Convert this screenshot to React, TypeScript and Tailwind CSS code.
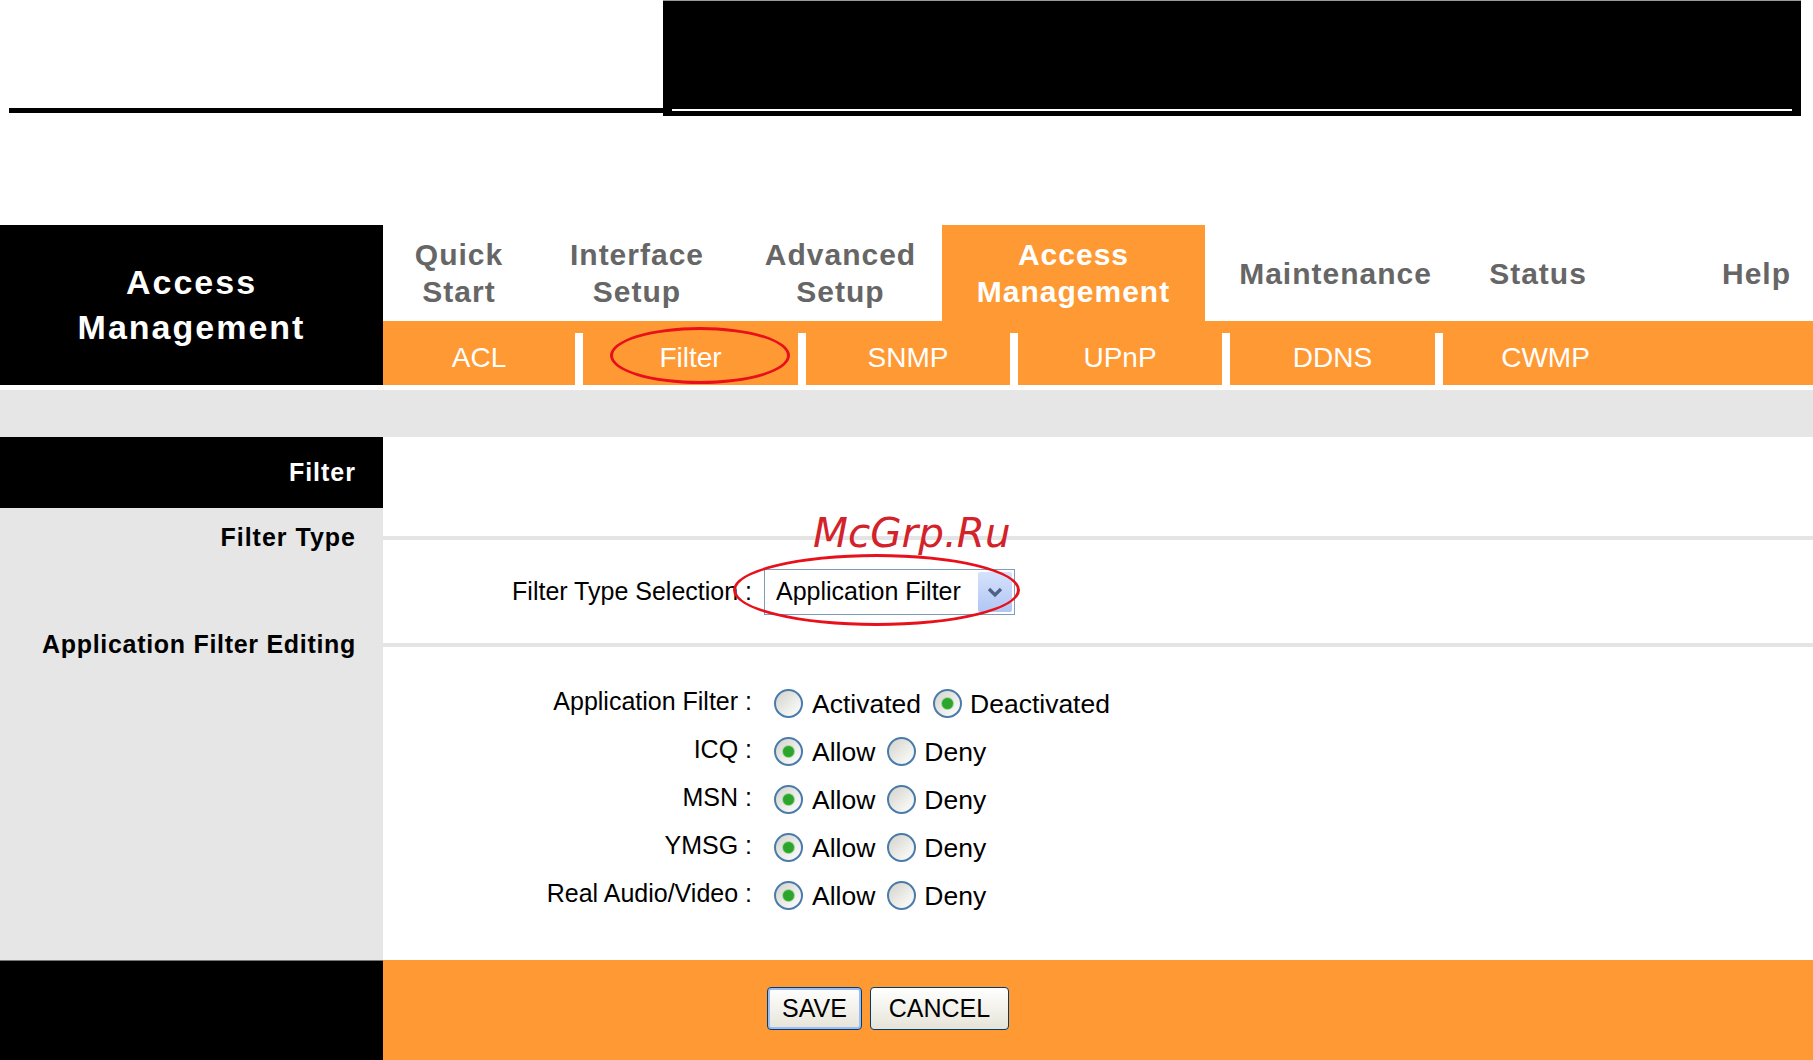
import React from "react";

interface RadioProps {
  on?: boolean;
  className?: string;
}

// XP style radio button
function Radio({ on, className }: RadioProps) {
  return (
    <span
      className={`w-[29px] h-[29px] shrink-0 rounded-full border-2 border-[#4a7bab] bg-linear-to-br from-[#d4d4cc] to-white flex items-center justify-center ${className ?? ""}`}
    >
      {on && <span className="w-[11px] h-[11px] rounded-full bg-[#2da52d] shadow-[0_0_0_1px_#9ad69a]" />}
    </span>
  );
}

interface RowProps {
  label: string;
  first: string;
  second: string;
  firstOn: boolean;
}

function RadioRow({ label, first, second, firstOn }: RowProps) {
  return (
    <div className="h-[48px] flex">
      <div className="w-[383px] shrink-0 bg-[#e6e6e6]" />
      <div className="flex-1 flex items-center text-[25px] text-black">
        <span className="w-[369px] text-right">{label}</span>
        <Radio on={firstOn} className="ml-[22px] mt-[3px]" />
        <span className="ml-[9px] mt-[5px] text-[26.5px]">{first}</span>
        <Radio on={!firstOn} className="ml-[12px] mt-[3px]" />
        <span className="ml-[8px] mt-[5px] text-[26.5px]">{second}</span>
      </div>
    </div>
  );
}

export default function App() {
  const rows: RowProps[] = [
    { label: "Application Filter :", first: "Activated", second: "Deactivated", firstOn: false },
    { label: "ICQ :", first: "Allow", second: "Deny", firstOn: true },
    { label: "MSN :", first: "Allow", second: "Deny", firstOn: true },
    { label: "YMSG :", first: "Allow", second: "Deny", firstOn: true },
    { label: "Real Audio/Video :", first: "Allow", second: "Deny", firstOn: true },
  ];

  return (
    <div className="w-[1813px] h-[1060px] overflow-hidden bg-white font-['Liberation_Sans',Arial,sans-serif]">
      {/* header strip */}
      <div className="h-[225px] flex items-start">
        <div className="w-[663px] h-[116px] flex items-end pb-[3px] pl-[9px]">
          <div className="h-[5px] w-full bg-black" />
        </div>
        <div className="w-[1138px] h-[116px] bg-black border-t border-[#999] flex items-end px-[9px] pb-[5px]">
          <div className="h-[2px] w-full bg-white" />
        </div>
      </div>

      {/* navigation */}
      <div className="flex h-[160px]">
        <div className="w-[383px] shrink-0 bg-black text-white font-bold text-[34px] leading-[45px] tracking-[2px] flex flex-col items-center justify-center">
          <span>Access</span>
          <span>Management</span>
        </div>
        <div className="flex-1 flex flex-col">
          <div className="h-[96px] flex text-[30px] font-bold tracking-[1px] leading-[37px] text-[#666]">
            <div className="w-[152px] flex flex-col items-center justify-center">
              <span>Quick</span>
              <span>Start</span>
            </div>
            <div className="w-[204px] flex flex-col items-center justify-center">
              <span>Interface</span>
              <span>Setup</span>
            </div>
            <div className="w-[203px] flex flex-col items-center justify-center">
              <span>Advanced</span>
              <span>Setup</span>
            </div>
            <div className="w-[263px] bg-[#ff9933] text-white flex flex-col items-center justify-center">
              <span>Access</span>
              <span>Management</span>
            </div>
            <div className="w-[261px] flex items-center justify-center">Maintenance</div>
            <div className="w-[144px] flex items-center justify-center">Status</div>
            <div className="flex-1 flex items-center justify-end pr-[22px]">Help</div>
          </div>
          <div className="h-[64px] bg-[#ff9933] flex text-white text-[28px]">
            <div className="w-[192px] flex items-center justify-center pt-[10px]">ACL</div>
            <div className="w-[8px] mt-[12px] bg-white" />
            <div className="relative w-[215px] flex items-center justify-center pt-[10px]">
              Filter
              <div className="absolute left-[27px] top-[6px] w-[180px] h-[57px] rounded-[50%] border-[3px] border-[#e8101a]" />
            </div>
            <div className="w-[8px] mt-[12px] bg-white" />
            <div className="w-[204px] flex items-center justify-center pt-[10px]">SNMP</div>
            <div className="w-[8px] mt-[12px] bg-white" />
            <div className="w-[204px] flex items-center justify-center pt-[10px]">UPnP</div>
            <div className="w-[8px] mt-[12px] bg-white" />
            <div className="w-[205px] flex items-center justify-center pt-[10px]">DDNS</div>
            <div className="w-[8px] mt-[12px] bg-white" />
            <div className="w-[205px] flex items-center justify-center pt-[10px]">CWMP</div>
          </div>
        </div>
      </div>

      <div className="h-[47px] mt-[5px] bg-[#e6e6e6]" />

      {/* content */}
      <div className="h-[523px] flex flex-col">
        <div className="h-[71px] flex">
          <div className="w-[383px] shrink-0 bg-black text-white font-bold text-[25px] tracking-[1px] flex items-center justify-end pr-[27px]">
            Filter
          </div>
          <div className="flex-1" />
        </div>

        <div className="h-[60px] flex">
          <div className="w-[383px] shrink-0 bg-[#e6e6e6] font-bold text-[25px] tracking-[1px] text-black flex items-center justify-end pr-[27px]">
            Filter Type
          </div>
          <div className="flex-1 flex items-center">
            <div className="h-[4px] w-full bg-[#e4e4e4]" />
          </div>
        </div>

        <div className="h-[48px] flex">
          <div className="w-[383px] shrink-0 bg-[#e6e6e6]" />
          <div className="flex-1 flex items-center text-[25px] text-black">
            <span className="w-[369px] text-right">Filter Type Selection :</span>
            <div className="relative ml-[12px] w-[251px] h-[46px] border border-[#7f9db9] bg-white flex items-center">
              <span className="flex-1 pl-[11px]">Application Filter</span>
              <span className="w-[34px] h-[40px] mr-[2px] rounded-[2px] bg-linear-to-b from-[#d6e2fd] to-[#b1c6f4] flex items-center justify-center">
                <svg width="18" height="12" viewBox="0 0 18 12">
                  <polyline points="3,3 9,9 15,3" fill="none" stroke="#4d6185" strokeWidth="3.2" />
                </svg>
              </span>
              <span className="absolute left-[48px] top-[-57px] whitespace-nowrap italic font-['DejaVu_Sans',sans-serif] text-[40.5px] leading-[40px] text-[#d3222a]">
                McGrp.Ru
              </span>
              <div className="absolute left-[-32px] top-[-16px] w-[287px] h-[72px] rounded-[50%] border-[3px] border-[#e8101a]" />
            </div>
          </div>
        </div>

        <div className="h-[58px] flex">
          <div className="w-[383px] shrink-0 bg-[#e6e6e6] font-bold text-[25px] tracking-[0.7px] text-black flex items-center justify-end pr-[27px]">
            Application Filter Editing
          </div>
          <div className="flex-1 flex items-center">
            <div className="h-[4px] w-full bg-[#e4e4e4]" />
          </div>
        </div>

        <div className="h-[4px] flex">
          <div className="w-[383px] shrink-0 bg-[#e6e6e6]" />
        </div>

        {rows.map((r) => (
          <RadioRow key={r.label} {...r} />
        ))}

        <div className="flex-1 flex">
          <div className="w-[383px] shrink-0 bg-[#e6e6e6]" />
        </div>
      </div>

      {/* footer */}
      <div className="h-[100px] flex">
        <div className="w-[383px] shrink-0 bg-black border-t border-[#777]" />
        <div className="flex-1 bg-[#ff9933] pl-[384px] pt-[27px] flex items-start gap-[8px] text-[25px] text-black">
          <button className="w-[95px] h-[43px] rounded-[4px] border border-[#003c74] bg-linear-to-b from-white to-[#e6e4d8] shadow-[inset_0_0_0_2px_#9dbcf2]">
            SAVE
          </button>
          <button className="w-[139px] h-[43px] rounded-[4px] border border-[#003c74] bg-linear-to-b from-white to-[#e6e4d8]">
            CANCEL
          </button>
        </div>
      </div>
    </div>
  );
}
